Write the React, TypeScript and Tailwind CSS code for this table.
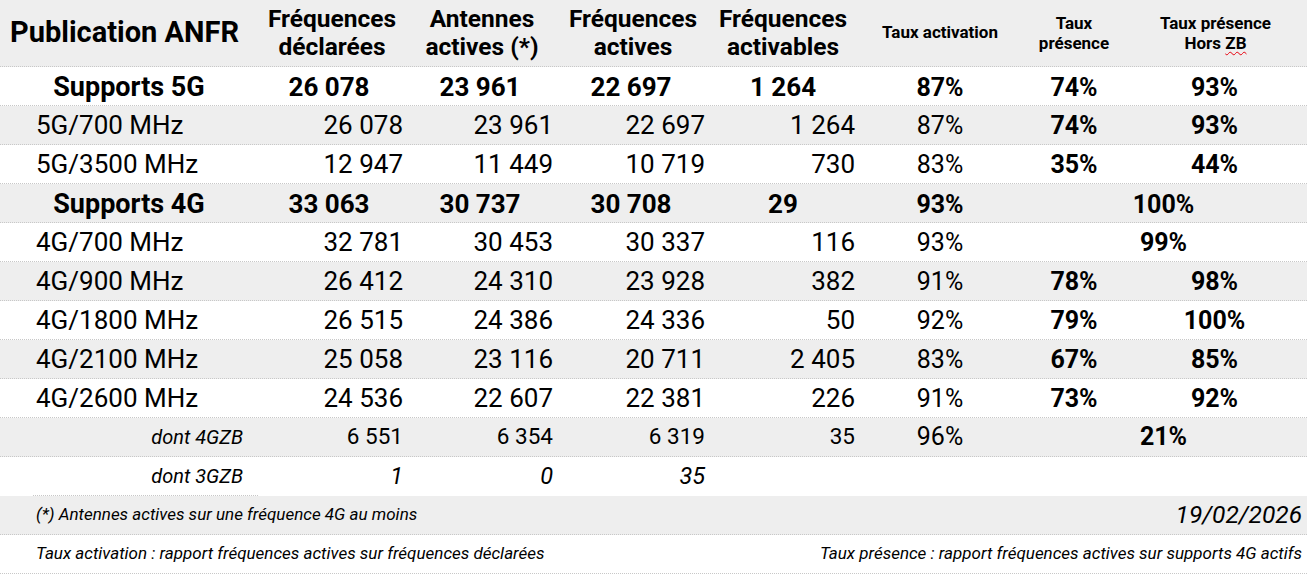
import React from "react";

type Row = {
  label: string;
  kind: "total" | "band" | "sub";
  vals: string[];
  taux: string;
  pres?: string;
  horsZb?: string;
  merged?: string;
};

const rows: Row[] = [
  { label: "Supports 5G", kind: "total", vals: ["26 078", "23 961", "22 697", "1 264"], taux: "87%", pres: "74%", horsZb: "93%" },
  { label: "5G/700 MHz", kind: "band", vals: ["26 078", "23 961", "22 697", "1 264"], taux: "87%", pres: "74%", horsZb: "93%" },
  { label: "5G/3500 MHz", kind: "band", vals: ["12 947", "11 449", "10 719", "730"], taux: "83%", pres: "35%", horsZb: "44%" },
  { label: "Supports 4G", kind: "total", vals: ["33 063", "30 737", "30 708", "29"], taux: "93%", merged: "100%" },
  { label: "4G/700 MHz", kind: "band", vals: ["32 781", "30 453", "30 337", "116"], taux: "93%", merged: "99%" },
  { label: "4G/900 MHz", kind: "band", vals: ["26 412", "24 310", "23 928", "382"], taux: "91%", pres: "78%", horsZb: "98%" },
  { label: "4G/1800 MHz", kind: "band", vals: ["26 515", "24 386", "24 336", "50"], taux: "92%", pres: "79%", horsZb: "100%" },
  { label: "4G/2100 MHz", kind: "band", vals: ["25 058", "23 116", "20 711", "2 405"], taux: "83%", pres: "67%", horsZb: "85%" },
  { label: "4G/2600 MHz", kind: "band", vals: ["24 536", "22 607", "22 381", "226"], taux: "91%", pres: "73%", horsZb: "92%" },
  { label: "dont 4GZB", kind: "sub", vals: ["6 551", "6 354", "6 319", "35"], taux: "96%", merged: "21%" },
];

const grid = "grid grid-cols-[258px_152px_150px_152px_150px_156px_112px_177px]";
const line = "border-b border-dotted border-[#c8c8c8]";

export default function App() {
  return (
    <div className="w-[1307px] h-[578px] bg-white text-black font-['Roboto',sans-serif] overflow-hidden">
      {/* header */}
      <div className={`${grid} h-[67px] bg-[#eeeeee] ${line} items-center font-bold`}>
        <div className="pl-[10px] text-[29px] whitespace-nowrap">Publication ANFR</div>
        <div className="text-center text-[24.5px] leading-[28px] pr-[4px]">Fréquences<br />déclarées</div>
        <div className="text-center text-[24.5px] leading-[28px] pr-[6px]">Antennes<br />actives (*)</div>
        <div className="text-center text-[24.5px] leading-[28px] pr-[6px]">Fréquences<br />actives</div>
        <div className="text-center text-[24.5px] leading-[28px] pr-[8px]">Fréquences<br />activables</div>
        <div className="text-center text-[17px] leading-[20px] pb-[3px]">Taux activation</div>
        <div className="text-center text-[17px] leading-[20px]">Taux<br />présence</div>
        <div className="text-center text-[17px] leading-[20px] pr-[6px]">
          Taux présence<br />Hors{" "}
          <span className="underline decoration-wavy decoration-red-600 decoration-1 underline-offset-2">ZB</span>
        </div>
      </div>

      {rows.map((r, i) => {
        const bg = i % 2 === 1 ? "bg-[#eeeeee]" : "bg-white";
        const bold = r.kind === "total";
        return (
          <div key={r.label} className={`${grid} h-[39px] ${bg} ${line} items-center text-[26px] whitespace-nowrap`}>
            {r.kind === "total" && <div className="text-center font-bold text-[27px]">{r.label}</div>}
            {r.kind === "band" && <div className="pl-[36px]">{r.label}</div>}
            {r.kind === "sub" && <div className="text-right pr-[15px] text-[20px] italic">{r.label}</div>}
            {r.vals.map((v, j) =>
              bold ? (
                <div key={j} className={`text-center font-bold ${j === 3 ? "pr-[8px]" : "pr-[10px]"}`}>{v}</div>
              ) : (
                <div key={j} className={`text-right pr-[7px] ${r.kind === "sub" ? "text-[22.5px]" : ""}`}>{v}</div>
              )
            )}
            <div className={`text-center text-[25px] ${bold ? "font-bold" : ""}`}>{r.taux}</div>
            {r.merged ? (
              <div className="col-span-2 text-center font-bold text-[25px] pl-[2px]">{r.merged}</div>
            ) : (
              <>
                <div className="text-center font-bold text-[25px]">{r.pres}</div>
                <div className="text-center font-bold text-[25px] pr-[8px]">{r.horsZb}</div>
              </>
            )}
          </div>
        );
      })}

      {/* dont 3GZB */}
      <div className={`${grid} h-[39px] bg-white items-center text-[23.5px] italic`}>
        <div className="h-full pl-[33px]">
          <div className={`h-full flex items-center justify-end pr-[15px] text-[20px] ${line}`}>dont 3GZB</div>
        </div>
        <div className="text-right pr-[7px]">1</div>
        <div className="text-right pr-[7px]">0</div>
        <div className="text-right pr-[7px]">35</div>
      </div>

      {/* footers */}
      <div className={`h-[39px] bg-[#eeeeee] ${line} flex items-center justify-between italic pl-[36px] pr-[5px] whitespace-nowrap`}>
        <span className="text-[17px]">(*) Antennes actives sur une fréquence 4G au moins</span>
        <span className="text-[24.5px]">19/02/2026</span>
      </div>
      <div className={`h-[39px] bg-white ${line} flex items-center justify-between italic text-[17px] pl-[36px] pr-[5px] whitespace-nowrap`}>
        <span>Taux activation : rapport fréquences actives sur fréquences déclarées</span>
        <span>Taux présence : rapport fréquences actives sur supports 4G actifs</span>
      </div>
    </div>
  );
}
